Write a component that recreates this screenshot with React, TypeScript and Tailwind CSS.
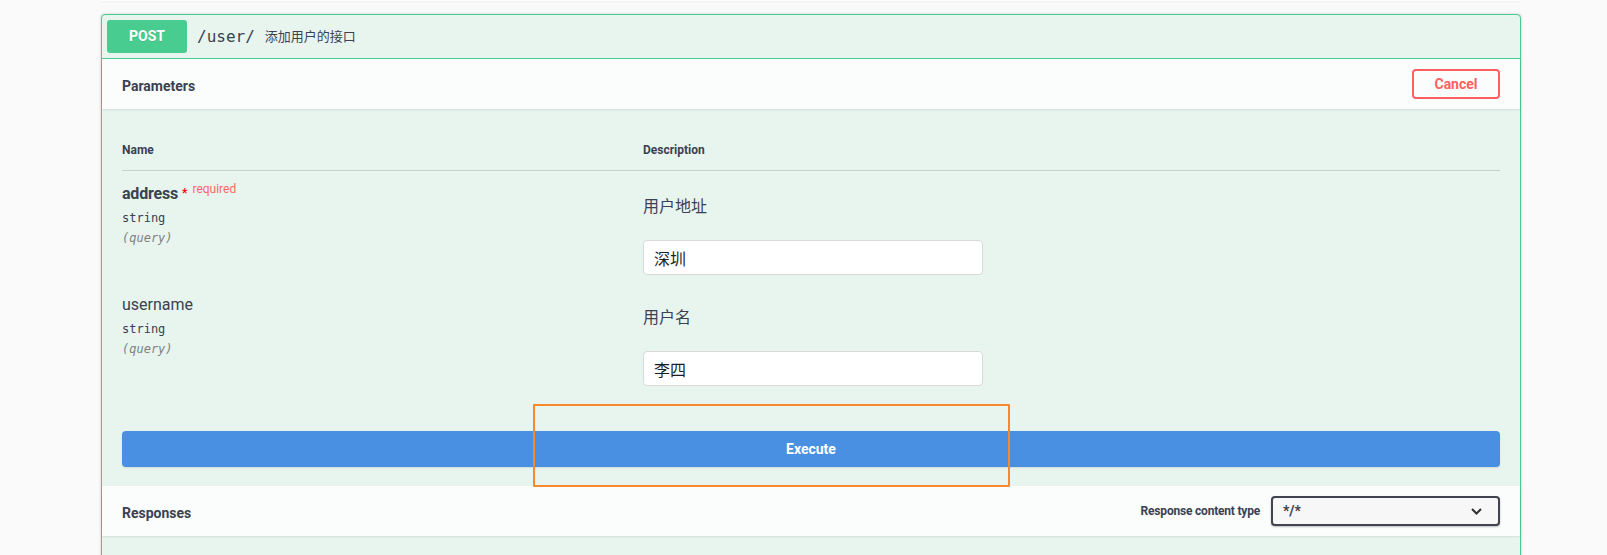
import React from 'react';

const sans = 'font-["Roboto","Noto_Sans_CJK_SC",sans-serif]';
const mono = 'font-["DejaVu_Sans_Mono","Liberation_Mono",monospace]';

interface Param {
  name: string;
  required?: boolean;
  type: string;
  where: string;
  description: string;
  value: string;
}

const params: Param[] = [
  { name: 'address', required: true, type: 'string', where: '(query)', description: '用户地址', value: '深圳' },
  { name: 'username', type: 'string', where: '(query)', description: '用户名', value: '李四' },
];

const ParamRow = ({ p }: { p: Param }) => (
  <div className="flex">
    <div className="w-[521px] shrink-0 pt-[2px]">
      <div className="flex items-start leading-[24px] text-[16px] text-[#3b4151]">
        <span className={p.required ? 'font-bold tracking-[-0.2px]' : 'font-normal'}>{p.name}</span>
        {p.required && (
          <>
            <span className="ml-[4px] text-[12px] leading-[18px] font-bold text-[#f00] relative top-[2px]">*</span>
            <span className="ml-[5px] text-[12px] leading-[12px] text-[#ff0000]/60 relative top-[1px]">required</span>
          </>
        )}
      </div>
      <div className={`${mono} mt-[2px] text-[12px] leading-[20px] text-[#3b4151]`}>{p.type}</div>
      <div className={`${mono} text-[12px] leading-[20px] italic text-[#808080]`}>{p.where}</div>
    </div>
    <div className="flex-1">
      <p className="mt-[15px] text-[16px] leading-[24px] text-[#3b4151]">{p.description}</p>
      <input
        readOnly
        value={p.value}
        className="mt-[21px] block w-[340px] h-[35px] rounded-[4px] border border-[#d9d9d9] bg-white pl-[10px] text-[16px] text-[#1f1f1f] outline-none"
      />
    </div>
  </div>
);

export default function App() {
  return (
    <div className={`${sans} relative min-h-screen bg-[#fafafa]`}>
      <div className="ml-[101px] w-[1420px]">
        {/* previous block edge */}
        <div className="h-[1px] bg-[#fdfdfd] shadow-[0_1px_2px_rgba(0,0,0,0.06)]" />

        <div className="mt-[13px] rounded-[4px] border border-[#49cc90] bg-[#e8f5ef] shadow-[0_0_3px_rgba(0,0,0,0.19)]">
          {/* Summary */}
          <div className="flex items-center border-b border-[#49cc90] p-[5px]">
            <div className="flex h-[33px] w-[80px] items-center justify-center rounded-[3px] bg-[#49cc90] text-[14px] font-bold text-white [text-shadow:0_1px_0_rgba(0,0,0,0.1)]">
              POST
            </div>
            <span className={`${mono} ml-[10px] text-[16px] text-[#3b4151]`}>/user/</span>
            <span className="ml-[10px] text-[13px] text-[#3b4151]">添加用户的接口</span>
          </div>

          {/* Parameters header */}
          <div className="flex h-[50px] items-center justify-between bg-white/80 px-[20px] shadow-[0_1px_2px_rgba(0,0,0,0.1)]">
            <h4 className="relative top-[2px] text-[14px] font-bold text-[#3b4151]">Parameters</h4>
            <button className="h-[30px] w-[88px] rounded-[4px] border-2 border-[#ff6060] text-[14px] font-bold text-[#ff6060]">
              Cancel
            </button>
          </div>

          {/* Parameters table */}
          <div className="px-[20px] pt-[20px] pb-[19px]">
            <div className="flex h-[42px] items-center border-b border-[#c5cfcd] text-[12px] font-bold text-[#3b4151]">
              <div className="w-[521px]">Name</div>
              <div>Description</div>
            </div>
            <div className="flex flex-col gap-[16px] pt-[9px]">
              {params.map((p) => (
                <ParamRow key={p.name} p={p} />
              ))}
            </div>
            <button className="mt-[45px] flex h-[36px] w-full items-center justify-center rounded-[4px] bg-[#4990e2] text-[14px] font-bold text-white shadow-[0_1px_2px_rgba(0,0,0,0.1)]">
              Execute
            </button>
          </div>

          {/* Responses header */}
          <div className="flex h-[50px] items-center justify-between bg-white/80 px-[20px] shadow-[0_1px_2px_rgba(0,0,0,0.1)]">
            <h4 className="relative top-[2px] text-[14px] font-bold text-[#3b4151]">Responses</h4>
            <div className="flex items-center">
              <span className="mr-[11px] text-[12px] font-bold tracking-[-0.2px] text-[#3b4151]">Response content type</span>
              <div className="flex h-[30px] w-[229px] items-center justify-between rounded-[4px] border-2 border-[#41444e] bg-[#f7f7f7] pl-[10px] pr-[16px] shadow-[0_1px_2px_rgba(0,0,0,0.25)]">
                <span className="text-[14px] font-bold text-[#3b4151]">*/*</span>
                <svg width="11" height="7" viewBox="0 0 11 7" fill="none">
                  <path d="M1 1l4.5 4.5L10 1" stroke="#303030" strokeWidth="2" />
                </svg>
              </div>
            </div>
          </div>
          <div className="h-[40px]" />
        </div>
      </div>

      {/* annotation */}
      <div className="absolute left-[533px] top-[404px] h-[83px] w-[477px] rounded-[1px] border-2 border-[#f7882c]" />
    </div>
  );
}
